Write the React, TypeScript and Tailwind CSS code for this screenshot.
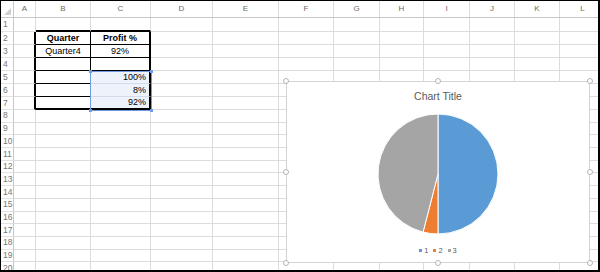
const COLS = [
  { name: "A", w: 22 },
  { name: "B", w: 55 },
  { name: "C", w: 60 },
  { name: "D", w: 62 },
  { name: "E", w: 66 },
  { name: "F", w: 55 },
  { name: "G", w: 46 },
  { name: "H", w: 44 },
  { name: "I", w: 46 },
  { name: "J", w: 45 },
  { name: "K", w: 45 },
  { name: "L", w: 46 },
];

const ROWS = Array.from({ length: 20 }, (_, i) => i + 1);

const rowHeight = (r: number) => (r === 1 ? 14 : r <= 7 ? 13 : 12.7);

// values shown in the little table B2:C7
const CELLS: Record<string, { text: string; cls?: string }> = {
  B2: { text: "Quarter", cls: "font-bold justify-center" },
  C2: { text: "Profit %", cls: "font-bold justify-center" },
  B3: { text: "Quarter4", cls: "justify-center" },
  C3: { text: "92%", cls: "justify-center" },
  C5: { text: "100%", cls: "justify-end pr-[3px]" },
  C6: { text: "8%", cls: "justify-end pr-[3px]" },
  C7: { text: "92%", cls: "justify-end pr-[3px]" },
};

const LEGEND = [
  { label: "1", color: "bg-[#5b9bd5]" },
  { label: "2", color: "bg-[#ed7d31]" },
  { label: "3", color: "bg-[#a5a5a5]" },
];

function cellBorder(r: number, c: number) {
  const inTable = r >= 2 && r <= 7 && (c === 1 || c === 2);
  let right = "border-r border-r-[#dcdcdc]";
  let bottom = "border-b border-b-[#dcdcdc]";
  if (c === 0 && r >= 2 && r <= 7) right = "border-r-2 border-r-black";
  if (inTable) {
    right = c === 1 ? "border-r border-r-black" : "border-r-2 border-r-black";
    bottom = r === 7 ? "border-b-2 border-b-black" : "border-b border-b-black";
  }
  if (r === 1 && (c === 1 || c === 2)) bottom = "border-b-2 border-b-black";
  if (c === 2 && (r === 5 || r === 6)) bottom = "border-b border-b-[#d3dbea]";
  return `${right} ${bottom}`;
}

function PieChart() {
  const cx = 151;
  const cy = 70;
  const r = 60;
  const a = ((90 + 14.4) * Math.PI) / 180;
  const ox = cx + r * Math.cos(a);
  const oy = cy + r * Math.sin(a);
  return (
    <svg width="302" height="131" className="shrink-0">
      <path d={`M${cx} ${cy} L${cx} ${cy - r} A${r} ${r} 0 0 1 ${cx} ${cy + r} Z`} fill="#5b9bd5" stroke="#fff" strokeWidth="1" />
      <path d={`M${cx} ${cy} L${cx} ${cy + r} A${r} ${r} 0 0 1 ${ox} ${oy} Z`} fill="#ed7d31" stroke="#fff" strokeWidth="1" />
      <path d={`M${cx} ${cy} L${ox} ${oy} A${r} ${r} 0 0 1 ${cx} ${cy - r} Z`} fill="#a5a5a5" stroke="#fff" strokeWidth="1" />
    </svg>
  );
}

function Handle({ className }: { className: string }) {
  return <div className={`absolute h-[6px] w-[6px] rounded-full border border-[#b4b4b4] bg-white ${className}`} />;
}

export default function App() {
  return (
    <div className="h-[272px] w-[600px] overflow-hidden border-b-2 border-l border-r-2 border-t border-black bg-white font-['Liberation_Sans',Arial,sans-serif]">
      <div className="relative h-full w-full overflow-hidden">
        {/* column headers */}
        <div className="flex h-[17px] border-b border-b-[#c8c8c8]">
          <div className="flex w-[13px] shrink-0 items-end justify-end border-r border-r-[#c8c8c8] p-[2px]">
            <div className="h-0 w-0 border-b-[7px] border-l-[7px] border-b-[#cfcfcf] border-l-transparent" />
          </div>
          {COLS.map((col) => (
            <div
              key={col.name}
              style={{ width: col.w }}
              className="flex shrink-0 items-center justify-center border-r border-r-[#dcdcdc] text-[8px] text-[#6b6b6b]"
            >
              {col.name}
            </div>
          ))}
        </div>

        {/* rows */}
        {ROWS.map((r) => (
          <div key={r} className="flex" style={{ height: rowHeight(r) }}>
            <div className="flex w-[13px] shrink-0 items-center border-b border-r border-b-[#e2e2e2] border-r-[#c8c8c8] pl-[2px] text-[8.5px] text-[#767676]">
              {r}
            </div>
            {COLS.map((col, c) => {
              const cell = CELLS[`${col.name}${r}`];
              const selected = c === 2 && r >= 5 && r <= 7;
              return (
                <div
                  key={col.name}
                  style={{ width: col.w }}
                  className={`flex shrink-0 items-center text-[9px] leading-none text-black ${cellBorder(r, c)} ${selected ? "bg-[#eef3fb]" : ""} ${cell?.cls ?? ""}`}
                >
                  {cell?.text}
                </div>
              );
            })}
          </div>
        ))}

        {/* selection C5:C7 */}
        <div className="pointer-events-none absolute left-[89px] top-[70px] h-[40px] w-[62px] border border-[#6e9be3]">
          <div className="absolute -left-[2px] -top-[2px] h-[3px] w-[3px] bg-[#6e9be3]" />
          <div className="absolute -right-[2px] -top-[2px] h-[3px] w-[3px] bg-[#6e9be3]" />
          <div className="absolute -bottom-[2px] -left-[2px] h-[3px] w-[3px] bg-[#6e9be3]" />
          <div className="absolute -bottom-[2px] -right-[2px] h-[3px] w-[3px] bg-[#6e9be3]" />
        </div>

        {/* chart object floating over the sheet */}
        <div className="absolute left-[285px] top-[80px] flex h-[182px] w-[304px] flex-col items-center border border-[#d4d4d4] bg-white">
          <div className="h-[22px] pt-[9px] text-[10.5px] leading-none text-[#595959]">Chart Title</div>
          <PieChart />
          <div className="mt-[12px] flex justify-center gap-[5px] text-[7.5px] leading-none text-[#595959]">
            {LEGEND.map((item) => (
              <span key={item.label} className="flex items-center gap-[2px]">
                <span className={`h-[3px] w-[3px] ${item.color}`} />
                {item.label}
              </span>
            ))}
          </div>
          <Handle className="-left-[4px] -top-[4px]" />
          <Handle className="-top-[4px] left-[148px]" />
          <Handle className="-right-[4px] -top-[4px]" />
          <Handle className="-left-[4px] top-[87px]" />
          <Handle className="-right-[4px] top-[87px]" />
          <Handle className="-bottom-[4px] -left-[4px]" />
          <Handle className="-bottom-[4px] left-[148px]" />
          <Handle className="-bottom-[4px] -right-[4px]" />
        </div>
      </div>
    </div>
  );
}
